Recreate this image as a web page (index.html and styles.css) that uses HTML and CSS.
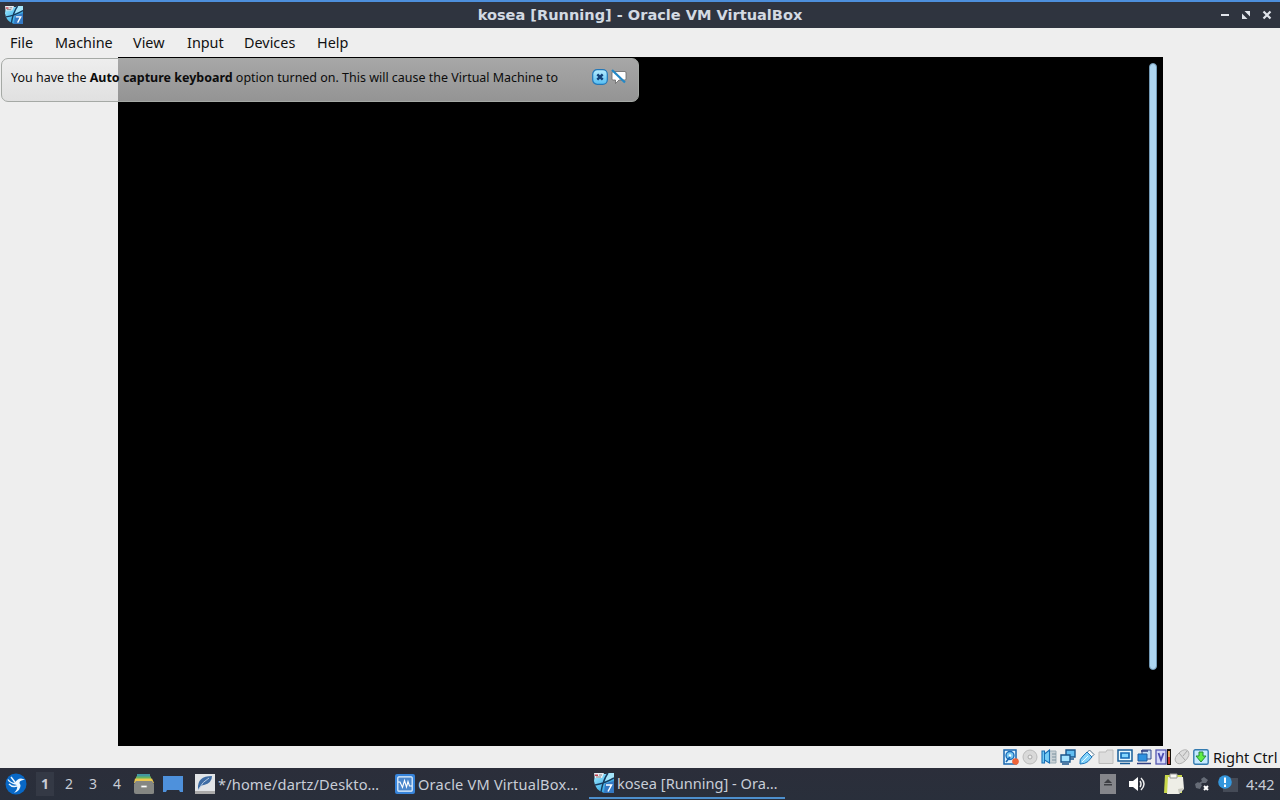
FILE: index.html
```html
<!DOCTYPE html>
<html lang="en">
<head>
<meta charset="utf-8">
<title>kosea [Running] - Oracle VM VirtualBox</title>
<link rel="stylesheet" href="styles.css">
</head>
<body>
<svg class="defs" width="0" height="0" aria-hidden="true">
  <defs>
    <linearGradient id="blue" x1="0" y1="0" x2="1" y2="1"><stop offset="0" stop-color="#a5ecff"/><stop offset=".6" stop-color="#45b4ea"/><stop offset="1" stop-color="#1668c0"/></linearGradient>
    <linearGradient id="pale" x1="0" y1="0" x2="0" y2="1"><stop offset="0" stop-color="#b8edff"/><stop offset="1" stop-color="#55bdf2"/></linearGradient>
    <symbol id="win7" viewBox="0 0 20 20">
      <path d="M1 1H20V20H10Q1 17 0 8Z" fill="url(#blue)"/>
      <path d="M0 0H10L8 5H1Z" fill="#e8edf2"/><path d="M1 1.5h3v1.5H1z" fill="#c33c4c"/><path d="M5 2h3M2 4h5" stroke="#666" stroke-width=".8"/>
      <path d="M13 0H20V5L11 8Z" fill="#a5e5fa"/>
      <path d="M14 0Q9 7 7 19M1 12Q10 11 20 5" fill="none" stroke="#173b5e" stroke-width="1.5"/>
      <path d="M11 10.5L20 8V20H10Z" fill="#3479c4"/><path d="M12 12H17.5L14 18.5" fill="none" stroke="#fff" stroke-width="1.5"/>
    </symbol>
  </defs>
</svg>
<div class="desktop">
  <header class="titlebar">
    <svg class="app-icon" viewBox="0 0 20 20"><use href="#win7"/></svg>
    <h1 class="title">kosea [Running] - Oracle VM VirtualBox</h1>
    <div class="window-buttons">
      <svg viewBox="0 0 10 10"><path d="M1 5H9" stroke="#e0e4eb" stroke-width="2"/></svg>
      <svg viewBox="0 0 10 10"><path d="M3.5 1H9V6.5ZM1 3.5V9H6.5Z" fill="#e0e4eb"/></svg>
      <svg viewBox="0 0 10 10"><path d="M1.5 1.5L8.5 8.5M8.5 1.5L1.5 8.5" stroke="#e0e4eb" stroke-width="2.2"/></svg>
    </div>
  </header>
  <nav class="menubar">
    <span class="m-file">File</span><span class="m-machine">Machine</span><span class="m-view">View</span><span class="m-input">Input</span><span class="m-devices">Devices</span><span class="m-help">Help</span>
  </nav>
  <main class="workspace">
    <div class="guest"><div class="scrollbar"></div></div>
    <div class="notice">
      <p class="notice-text">You have the <b>Auto capture keyboard</b> option turned on. This will cause the Virtual Machine to</p>
      <svg class="notice-icon" viewBox="0 0 16 16"><rect x=".7" y=".7" width="14.6" height="14.6" rx="4.5" fill="url(#pale)" stroke="#2377b8" stroke-width="1.2"/><path d="M5.3 5.3L10.7 10.7M10.7 5.3L5.3 10.7" stroke="#123f77" stroke-width="2.4"/></svg>
      <svg class="notice-icon mute" viewBox="0 0 16 16"><path d="M2 2.5H14Q15 2.5 15 4V10Q15 11 14 11H8L4.5 14.5V11H2Q1 11 1 10V4Q1 2.5 2 2.5Z" fill="#fff" stroke="#666" stroke-width=".8"/><path d="M1 1L14 13.5" stroke="#2388c6" stroke-width="2.3"/></svg>
    </div>
  </main>
  <footer class="statusbar">
    <svg viewBox="0 0 16 16"><path d="M1 1H13V15H1Z" fill="#e0f4ff" stroke="#1766b0" stroke-width="1.5"/><circle cx="7" cy="6.5" r="4" fill="#7acbf4" stroke="#1c6cba" stroke-width="1.4"/><circle cx="7" cy="6.5" r="1.2" fill="#fff"/><path d="M3 13L7 8" stroke="#1767b4" stroke-width="1.6"/><circle cx="12.5" cy="12.5" r="3.3" fill="#ed6338"/></svg>
    <svg viewBox="0 0 16 16"><circle cx="8" cy="8" r="7" fill="#d9d9d9" stroke="#bbb"/><circle cx="8" cy="8" r="2" fill="#eee" stroke="#aaa"/></svg>
    <svg viewBox="0 0 16 16"><path d="M9 2H15V14H9" fill="#c9d1d6" stroke="#9aabb5"/><path d="M11 5h4M11 8h4M11 11h4" stroke="#7d929f"/><path d="M1 2H3.5V5L8.5 1V14L3.5 11V14H1Z" fill="#75cdf6" stroke="#176eb5" stroke-width="1.1"/><path d="M3.5 5V11" stroke="#176eb5"/></svg>
    <svg viewBox="0 0 16 16"><path d="M6 1H15V8H6ZM8 10h6" fill="#62bdf1" stroke="#1a568d" stroke-width="1.4"/><path d="M1 6H10V13H1ZM2 15H9" fill="#a6e3ff" stroke="#1a568d" stroke-width="1.4"/></svg>
    <svg viewBox="0 0 16 16"><path d="M10.5 1L15 5.5L12.5 8L8 3.5Z" fill="#fff" stroke="#50718a"/><path d="M8 3L13 8L9 12.5Q6 15 1 15Q0 10 4 7Z" fill="#83d2fa" stroke="#1d74b8"/><path d="M3 13L9 7" stroke="#e9faff"/></svg>
    <svg viewBox="0 0 16 16"><path d="M1 14.5V3H8L9 1H15V14.5Z" fill="#ddd" stroke="#bcbcbc"/></svg>
    <svg viewBox="0 0 16 16"><path d="M1 1H15V12H1ZM3 14.5H13" fill="#e9faff" stroke="#175c98" stroke-width="1.5"/><path d="M4 4H12V9H4Z" fill="#83d7ff" stroke="#146bb6" stroke-width="1.7"/></svg>
    <svg viewBox="0 0 16 16"><path d="M6 1H15V10H6Z" fill="#c5ddf5" stroke="#37488d"/><path d="M2 5H11V12H2Z" fill="#3091df" stroke="#1e5b9e"/><path d="M1 14.5H15M5 2H12" stroke="#303f83" stroke-width="1.5"/></svg>
    <svg viewBox="0 0 16 16"><rect x="1" y="1" width="10" height="14" fill="#d5d9fa" stroke="#5558b0" stroke-width="1.3"/><path d="M3.5 4L6 11L8.5 4" fill="none" stroke="#4b4bb1" stroke-width="1.8"/><path d="M12 0h4v16h-4z" fill="#17120d"/><path d="M13 2h2v6h-2z" fill="#e9a85b"/><path d="M13 8h2v7h-2z" fill="#c8362e"/></svg>
    <svg viewBox="0 0 16 16"><path d="M6 3Q11-1 14 2Q17 6 11 12Q5 17 2 13Q-1 9 6 3Z" fill="#ddd" stroke="#b2b2b2"/><path d="M5 4L11 11M9 7L13 2" stroke="#aaa"/></svg>
    <svg viewBox="0 0 16 16"><rect x=".8" y=".8" width="14.4" height="14.4" rx="1.5" fill="#c6eaff" stroke="#347bb0" stroke-width="1.4"/><path d="M6 3H10V7H13L8 13L3 7H6Z" fill="#60ee45" stroke="#248a38"/></svg>
    <span class="hostkey">Right Ctrl</span>
  </footer>
  <div class="taskbar">
    <svg class="launcher" viewBox="0 0 22 22"><circle cx="11" cy="11" r="10.5" fill="#0868c6"/><path d="M6 4L11 10.5M3 6.5Q5 10 11 11M4 11Q7 14.5 12 13" fill="none" stroke="#edf7ff" stroke-width="1.4"/><path d="M10 10Q12 5.5 16 5.5L20 6.5L16.5 7.5Q13 9 15.5 12Q16 17 9 20Q13 16 12 13Z" fill="#edf7ff"/></svg>
    <div class="desks"><b>1</b><span>2</span><span>3</span><span>4</span></div>
    <svg class="files" viewBox="0 0 20 20"><path d="M3 0H16V4H3Z" fill="#4298a1"/><path d="M2 2.5H17V8H2Z" fill="#66b461"/><path d="M1 4.5H18L20 9H0Z" fill="#ebc74f"/><path d="M2 7H18L20 10V19Q20 20 18 20H2Q0 20 0 18V10Z" fill="#858783"/><rect x="7" y="11.5" width="6" height="2" rx="1" fill="#fff" stroke="#a5a6a0" stroke-width=".6"/></svg>
    <svg class="show" viewBox="0 0 20 16"><path d="M0 0H20V16H17L16 14H4L3 16H0Z" fill="#4e91dc"/></svg>
    <div class="task task-editor"><svg viewBox="0 0 20 20"><path d="M0 0H20V20H0Z" fill="#e1e4e7"/><path d="M0 17H20V20H0Z" fill="#aaa"/><path d="M3 15Q2 2 17 2Q17 9 9 11Q6 11 3 16Z" fill="#3e6ca4"/><path d="M3 16Q8 7 14 4" fill="none" stroke="#b7cce5"/></svg><span>*/home/dartz/Deskto…</span></div>
    <div class="task task-manager"><svg viewBox="0 0 20 20"><rect width="20" height="20" rx="2" fill="#3784da"/><rect x="2.8" y="2.8" width="14.4" height="14.4" rx="1" fill="#4b87cc" stroke="#e9f6ff" stroke-width="1.2"/><path d="M3 8H5L7.5 13.5L9.5 6.5L11.5 13L13 7.5L14.5 12H17" fill="none" stroke="#fff" stroke-width="1.1"/></svg><span>Oracle VM VirtualBox…</span></div>
    <div class="task task-machine"><svg viewBox="0 0 20 20"><use href="#win7"/></svg><span>kosea [Running] - Ora…</span></div>
    <div class="tray">
      <svg class="eject" viewBox="0 0 16 20"><path d="M0 0H16V20H0Z" fill="#85868b"/><path d="M4 9H12L8 5ZM4 10h8v1.5H4z" fill="#3d3e43"/></svg>
      <svg class="volume" viewBox="0 0 18 18"><path d="M1 6H5L10 2V16L5 12H1Z" fill="#fff"/><path d="M12 6Q14 9 12 12M13 3Q19 9 13 15" fill="none" stroke="#eee" stroke-width="1.5"/></svg>
      <svg class="clipboard" viewBox="0 0 20 22"><path d="M1 2H18V20H0Z" fill="#c9d84b"/><path d="M4 4H19L20 16L15 21H3Z" fill="#eeeee6"/><path d="M15 21L14 16L20 15" fill="#c9c9bf"/><path d="M6 1H13V5H6Z" fill="#f9f9f4" stroke="#999"/></svg>
      <svg class="network" viewBox="0 0 16 16"><path d="M7 3L10 1L14 4L12 7L9 7ZM1 8L4 6L8 9L6 13L2 12Z" fill="#666c77"/><path d="M5 8L10 5" stroke="#666c77" stroke-width="2"/><path d="M10 10L14 14M14 10L10 14" stroke="#fff" stroke-width="2"/></svg>
      <svg class="update" viewBox="0 0 20 18"><path d="M5 3H20V17H5Z" fill="#454b57"/><circle cx="7" cy="7" r="6.8" fill="#3496dc"/><path d="M7 2.5V8M7 9.5V12" stroke="#fff" stroke-width="2"/></svg>
      <span class="clock">4:42</span>
    </div>
  </div>
</div>
</body>
</html>
```

FILE: styles.css
```css
* { box-sizing: border-box; }
body { margin: 0; overflow: hidden; font-family: "Noto Sans", "Open Sans", sans-serif; }
svg { display: block; flex: none; }
.defs { position: absolute; }
.desktop { width: 1280px; height: 800px; display: grid; grid-template-rows: 28px 29px 689px 22px 32px; background: #eeeeee; }

.titlebar { display: grid; grid-template-columns: 100px 1fr 100px; align-items: center; border-top: 2px solid #4d8fdc; background: #2f343f; }
.app-icon { width: 18px; height: 18px; margin-left: 5px; }
.title { margin: 0; text-align: center; color: #d3dae3; font: bold 14.55px/26px "DejaVu Sans", sans-serif; white-space: nowrap; }
.window-buttons { display: flex; gap: 11px; justify-content: flex-end; padding-right: 8px; }
.window-buttons svg { width: 10px; height: 10px; }

.menubar { display: flex; padding-left: 10px; color: #111; font-size: 14.4px; line-height: 29px; white-space: nowrap; }
.m-file { width: 45px; }
.m-machine { width: 78px; }
.m-view { width: 54px; }
.m-input { width: 57px; }
.m-devices { width: 73px; }

.workspace { position: relative; display: flex; justify-content: center; }
.guest { width: 1045px; margin-left: 1px; display: flex; justify-content: flex-end; padding: 6px 6px 0 0; background: #000; }
.scrollbar { width: 8px; height: 607px; border: 1px solid #7299b5; border-radius: 4px; background: #aed6f1; }
.notice { position: absolute; left: 1px; top: 1px; width: 638px; height: 44px; display: flex; align-items: flex-start; padding: 10px 10px 0 9px; border: 1px solid #a5a9a5; border-radius: 7px; background: linear-gradient(rgba(238, 238, 238, .7), rgba(218, 218, 218, .68)); }
.notice-text { margin: 0; width: 581px; color: #0c0c0c; font-size: 12.48px; line-height: 18px; white-space: nowrap; }
.notice-icon { width: 16px; height: 16px; }
.mute { margin-left: 3px; }

.statusbar { display: flex; align-items: center; justify-content: flex-end; gap: 3px; padding-right: 2px; }
.statusbar svg { width: 16px; height: 16px; }
.hostkey { width: 65px; margin-left: 1px; font-size: 14.67px; line-height: 22px; color: #111; white-space: nowrap; }

.taskbar { display: flex; align-items: center; background: linear-gradient(#2b2e3a, #292f3b); color: #c8cdd7; }
.launcher { width: 22px; height: 22px; margin-left: 5px; }
.desks { display: flex; margin-left: 6px; font-size: 14px; line-height: 24px; text-align: center; }
.desks > * { width: 24px; }
.desks b { width: 18px; margin: 0 3px; background: #343945; }
.files { width: 20px; height: 20px; margin-left: 5px; }
.show { width: 20px; height: 16px; margin-left: 9px; }
.task { height: 32px; display: flex; align-items: center; gap: 3px; font-size: 14.6px; white-space: nowrap; }
.task svg { width: 20px; height: 20px; }
.task-editor { width: 200px; margin-left: 12px; letter-spacing: .13px; }
.task-manager { width: 194px; letter-spacing: .2px; }
.task-machine { width: 196px; padding-left: 5px; border-bottom: 2px solid #4d8fcd; height: 30px; }
.tray { flex: 1; display: flex; align-items: center; justify-content: flex-end; padding-right: 4px; }
.eject { width: 16px; height: 20px; }
.volume { width: 18px; height: 18px; margin-left: 12px; }
.clipboard { width: 20px; height: 22px; margin-left: 18px; }
.network { width: 16px; height: 16px; margin-left: 10px; }
.update { width: 20px; height: 18px; margin-left: 8px; }
.clock { width: 30px; margin-left: 8px; font-size: 14.4px; white-space: nowrap; }
```
